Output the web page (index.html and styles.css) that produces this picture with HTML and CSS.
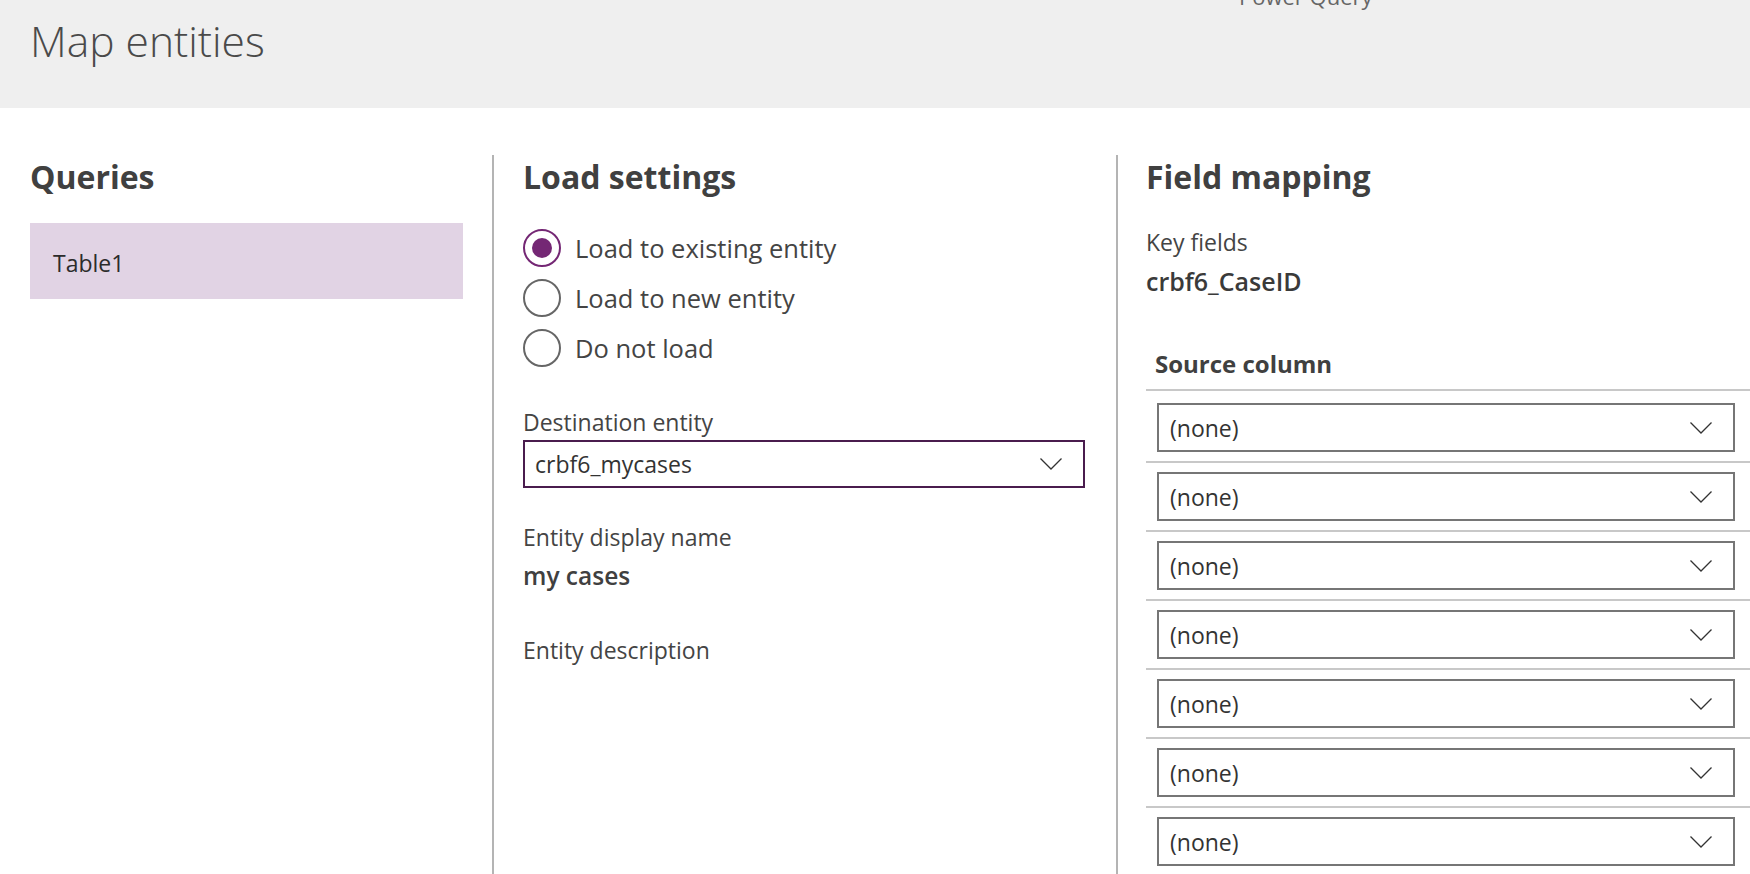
FILE: index.html
```html
<!DOCTYPE html>
<html lang="en">
<head>
<meta charset="utf-8">
<title>Map entities</title>
<link rel="stylesheet" href="styles.css">
</head>
<body>
<header class="header">
  <div class="app-name">Power Query</div>
  <h1 class="title">Map entities</h1>
</header>
<main class="columns">
  <section class="col col-queries">
    <h2 class="heading">Queries</h2>
    <div class="query-item">Table1</div>
  </section>
  <section class="col col-load">
    <h2 class="heading">Load settings</h2>
    <div class="radio-group">
      <div class="radio-row"><span class="radio checked"><span class="dot"></span></span><span class="radio-label">Load to existing entity</span></div>
      <div class="radio-row"><span class="radio"></span><span class="radio-label">Load to new entity</span></div>
      <div class="radio-row"><span class="radio"></span><span class="radio-label">Do not load</span></div>
    </div>
    <div class="label label-dest">Destination entity</div>
    <div class="dropdown dropdown-focus">
      <span class="dd-text">crbf6_mycases</span>
      <svg class="chev" width="24" height="14" viewBox="0 0 24 14"><polyline points="1.5,1.5 12,12 22.5,1.5" fill="none" stroke="#333" stroke-width="1.3"/></svg>
    </div>
    <div class="label label-display">Entity display name</div>
    <div class="value">my cases</div>
    <div class="label label-desc">Entity description</div>
  </section>
  <section class="col col-map">
    <h2 class="heading">Field mapping</h2>
    <div class="label label-key">Key fields</div>
    <div class="value value-key">crbf6_CaseID</div>
    <div class="map-table">
      <div class="map-head">Source column</div>
      <div class="map-row first"><div class="dropdown"><span class="dd-text">(none)</span><svg class="chev" width="24" height="14" viewBox="0 0 24 14"><polyline points="1.5,1.5 12,12 22.5,1.5" fill="none" stroke="#333" stroke-width="1.3"/></svg></div></div>
      <div class="map-row"><div class="dropdown"><span class="dd-text">(none)</span><svg class="chev" width="24" height="14" viewBox="0 0 24 14"><polyline points="1.5,1.5 12,12 22.5,1.5" fill="none" stroke="#333" stroke-width="1.3"/></svg></div></div>
      <div class="map-row"><div class="dropdown"><span class="dd-text">(none)</span><svg class="chev" width="24" height="14" viewBox="0 0 24 14"><polyline points="1.5,1.5 12,12 22.5,1.5" fill="none" stroke="#333" stroke-width="1.3"/></svg></div></div>
      <div class="map-row"><div class="dropdown"><span class="dd-text">(none)</span><svg class="chev" width="24" height="14" viewBox="0 0 24 14"><polyline points="1.5,1.5 12,12 22.5,1.5" fill="none" stroke="#333" stroke-width="1.3"/></svg></div></div>
      <div class="map-row"><div class="dropdown"><span class="dd-text">(none)</span><svg class="chev" width="24" height="14" viewBox="0 0 24 14"><polyline points="1.5,1.5 12,12 22.5,1.5" fill="none" stroke="#333" stroke-width="1.3"/></svg></div></div>
      <div class="map-row"><div class="dropdown"><span class="dd-text">(none)</span><svg class="chev" width="24" height="14" viewBox="0 0 24 14"><polyline points="1.5,1.5 12,12 22.5,1.5" fill="none" stroke="#333" stroke-width="1.3"/></svg></div></div>
      <div class="map-row"><div class="dropdown"><span class="dd-text">(none)</span><svg class="chev" width="24" height="14" viewBox="0 0 24 14"><polyline points="1.5,1.5 12,12 22.5,1.5" fill="none" stroke="#333" stroke-width="1.3"/></svg></div></div>
      <div class="map-row"><div class="dropdown"><span class="dd-text">(none)</span><svg class="chev" width="24" height="14" viewBox="0 0 24 14"><polyline points="1.5,1.5 12,12 22.5,1.5" fill="none" stroke="#333" stroke-width="1.3"/></svg></div></div>
    </div>
  </section>
</main>
</body>
</html>
```
FILE: styles.css
```css
* { box-sizing: border-box; }
html, body {
  margin: 0;
  padding: 0;
  height: 874px;
  overflow: hidden;
  background: #fff;
}
body {
  font-family: "Open Sans", "Noto Sans", sans-serif;
  color: #444;
}
.header {
  position: relative;
  height: 108px;
  background: #efefef;
  padding: 11px 0 0 30px;
}
.title {
  margin: 0;
  font-size: 42.5px;
  font-weight: 300;
  line-height: 60px;
  color: #4a4a4a;
}
.app-name {
  position: absolute;
  left: 1239px;
  top: -19px;
  font-size: 22px;
  line-height: 30px;
  color: #666;
}
.columns {
  display: grid;
  grid-template-columns: 494px 624px 1fr;
  margin-top: 47px;
  height: 719px;
}
.col {
  padding-top: 2px;
  overflow: hidden;
}
.col-queries {
  padding-left: 30px;
  padding-right: 29px;
  border-right: 2px solid #b4b4b4;
}
.col-load {
  padding-left: 29px;
  padding-right: 31px;
  border-right: 2px solid #b4b4b4;
}
.col-map {
  padding-left: 28px;
}
.heading {
  margin: 0;
  font-size: 32px;
  font-weight: 700;
  line-height: 40px;
  color: #404040;
}
.query-item {
  margin-top: 26px;
  height: 76px;
  background: #e1d3e4;
  display: flex;
  align-items: center;
  padding: 4px 0 0 23px;
  font-size: 23px;
  color: #2b2b2b;
}
.radio-group {
  margin-top: 26px;
}
.radio-row {
  height: 50px;
  display: flex;
  align-items: center;
  gap: 14px;
}
.radio {
  width: 38px;
  height: 38px;
  border-radius: 50%;
  border: 2px solid #666;
  display: flex;
  align-items: center;
  justify-content: center;
  flex: none;
}
.radio.checked {
  border-color: #742774;
}
.dot {
  width: 20px;
  height: 20px;
  border-radius: 50%;
  background: #742774;
}
.radio-label {
  font-size: 25.5px;
  color: #444;
  line-height: 30px;
}
.label {
  font-size: 23px;
  line-height: 30px;
  color: #444;
}
.label-dest { margin-top: 34px; }
.label-display { margin-top: 34px; }
.label-desc { margin-top: 44px; }
.label-key { margin-top: 30px; }
.value {
  margin-top: 9px;
  font-size: 24.5px;
  font-weight: 600;
  line-height: 30px;
  color: #404040;
}
.value-key {
  font-size: 25px;
  font-weight: 600;
  color: #3a3a3a;
}
.dropdown {
  height: 49px;
  border: 2px solid #767676;
  display: flex;
  align-items: center;
  justify-content: space-between;
  padding: 0 20px 0 10px;
  font-size: 23px;
  color: #333;
}
.dropdown-focus {
  margin-top: 3px;
  height: 48px;
  border-color: #4a1c4e;
}
.chev { flex: none; }
.map-table {
  margin-top: 53px;
}
.map-head {
  font-size: 24px;
  font-weight: 700;
  line-height: 30px;
  color: #404040;
  padding: 0 0 10px 9px;
  border-bottom: 2px solid #c8c8c8;
}
.map-row {
  padding: 9px 15px 9px 11px;
  border-bottom: 2px solid #c8c8c8;
}
.map-row.first {
  padding-top: 12px;
}
.map-row .dropdown {
  padding-left: 11px;
}
```
